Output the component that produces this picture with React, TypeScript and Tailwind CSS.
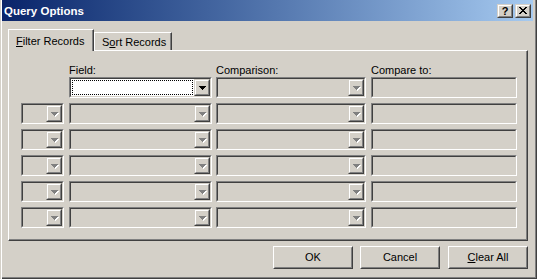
import React from "react";

const font = "font-['Liberation_Sans',Arial,sans-serif]";
const tri = "M0 0h7v1H0zM1 1h5v1H1zM2 2h3v1H2zM3 3h1v1H3z";

function DropArrow({ disabled }: { disabled?: boolean }) {
  if (disabled)
    return (
      <svg width="8" height="5" viewBox="0 0 8 5" shapeRendering="crispEdges" className="ml-px mt-px">
        <path d={tri} transform="translate(1 1)" fill="#ffffff" />
        <path d={tri} fill="#808080" />
      </svg>
    );
  return (
    <svg width="7" height="4" viewBox="0 0 7 4" shapeRendering="crispEdges">
      <path d={tri} fill="#000000" />
    </svg>
  );
}

function Sunken({
  className,
  innerClass,
  children,
}: {
  className: string;
  innerClass: string;
  children?: React.ReactNode;
}) {
  return (
    <div className={`border border-t-[#808080] border-l-[#808080] border-r-white border-b-white ${className}`}>
      <div
        className={`h-full w-full border border-t-[#404040] border-l-[#404040] border-r-[#d4d0c8] border-b-[#d4d0c8] ${innerClass}`}
      >
        {children}
      </div>
    </div>
  );
}

function DropBtn({ disabled }: { disabled?: boolean }) {
  return (
    <div className="w-[16px] h-full bg-[#d4d0c8] border border-t-[#d4d0c8] border-l-[#d4d0c8] border-r-[#404040] border-b-[#404040]">
      <div className="h-full w-full border border-t-white border-l-white border-r-[#808080] border-b-[#808080] flex items-center justify-center">
        <DropArrow disabled={disabled} />
      </div>
    </div>
  );
}

function Combo({ w, enabled, focus }: { w: string; enabled?: boolean; focus?: boolean }) {
  return (
    <Sunken className={`${w} h-[21px]`} innerClass={enabled ? "flex bg-white" : "flex bg-[#d4d0c8]"}>
      <div className="flex-1 p-px">
        {focus && <div className="h-full w-full border border-dotted border-black" />}
      </div>
      <DropBtn disabled={!enabled} />
    </Sunken>
  );
}

function PushButton({ children, className }: { children: React.ReactNode; className?: string }) {
  return (
    <div
      className={`w-[80px] h-[23px] border border-t-white border-l-white border-r-[#404040] border-b-[#404040] ${className ?? ""}`}
    >
      <div className="h-full w-full border border-t-[#d4d0c8] border-l-[#d4d0c8] border-r-[#808080] border-b-[#808080] flex items-center justify-center text-[11px] leading-[13px] text-black">
        {children}
      </div>
    </div>
  );
}

function CaptionBtn({ children, className }: { children: React.ReactNode; className?: string }) {
  return (
    <div
      className={`w-[16px] h-[14px] bg-[#d4d0c8] border border-t-[#d4d0c8] border-l-[#d4d0c8] border-r-[#404040] border-b-[#404040] ${className ?? ""}`}
    >
      <div className="h-full w-full border border-t-white border-l-white border-r-[#808080] border-b-[#808080] flex items-center justify-center">
        {children}
      </div>
    </div>
  );
}

export default function App() {
  const rows = [0, 1, 2, 3, 4, 5];
  return (
    <div
      className={`${font} w-[537px] h-[279px] bg-[#d4d0c8] text-black text-[11px] leading-[13px] flex flex-col shadow-[inset_1px_0_0_#d4d0c8,inset_2px_0_0_#ffffff,inset_-1px_-1px_0_#404040,inset_-2px_-2px_0_#808080]`}
    >
      {/* Title bar */}
      <div className="ml-[2px] w-[531px] h-[21px] bg-linear-to-r from-[#0a246a] to-[#a6caf0] flex items-center pl-[2px] pr-[2px]">
        <span className="text-white font-bold text-[11.5px] leading-[14px] flex-1 pt-[1px]">Query Options</span>
        <CaptionBtn>
          <span className="font-bold text-[11px] leading-[10px] text-black">?</span>
        </CaptionBtn>
        <CaptionBtn className="ml-[2px]">
          <svg width="8" height="7" viewBox="0 0 8 7" shapeRendering="crispEdges">
            <path
              d="M0 0h2v1H0zM6 0h2v1H6zM1 1h2v1H1zM5 1h2v1H5zM2 2h4v1H2zM3 3h2v1H3zM2 4h4v1H2zM1 5h2v1H1zM5 5h2v1H5zM0 6h2v1H0zM6 6h2v1H6z"
              fill="#000"
            />
          </svg>
        </CaptionBtn>
      </div>

      {/* Tabs */}
      <div className="ml-[8px] mt-[8px] h-[21px] flex items-end">
        <div className="relative z-10 h-[22px] -mb-px w-[86px] bg-[#d4d0c8] border-l border-t border-l-white border-t-white border-r border-r-[#404040] shadow-[inset_-1px_0_0_#808080] pl-[7px] pt-[5px] whitespace-nowrap">
          <span className="underline">F</span>ilter Records
        </div>
        <div className="h-[18px] w-[78px] border-l border-t border-l-white border-t-white border-r border-r-[#404040] shadow-[inset_-1px_0_0_#808080] pl-[7px] pt-[3px] whitespace-nowrap">
          S<span className="underline">o</span>rt Records
        </div>
      </div>

      {/* Panel */}
      <div className="ml-[8px] w-[520px] h-[191px] border-l border-t border-l-white border-t-white border-r border-b border-r-[#404040] border-b-[#404040] shadow-[inset_-1px_-1px_0_#808080] pl-[12px] pt-[13px]">
        <div className="flex h-[13px]">
          <div className="w-[48px]" />
          <div className="w-[143px]">Field:</div>
          <div className="ml-[4px] w-[150px]">Comparison:</div>
          <div className="ml-[5px] w-[146px]">Compare to:</div>
        </div>
        <div className="flex flex-col gap-[5px]">
          {rows.map((i) => (
            <div key={i} className="flex">
              {i === 0 ? <div className="w-[43px]" /> : <Combo w="w-[43px]" />}
              <div className="ml-[5px]">
                <Combo w="w-[143px]" enabled={i === 0} focus={i === 0} />
              </div>
              <div className="ml-[4px]">
                <Combo w="w-[150px]" />
              </div>
              <div className="ml-[5px]">
                <Sunken className="w-[146px] h-[21px]" innerClass="bg-[#d4d0c8]" />
              </div>
            </div>
          ))}
        </div>
      </div>

      {/* Buttons */}
      <div className="ml-[8px] mt-[5px] w-[520px] flex justify-end">
        <PushButton className="mr-[7px]">OK</PushButton>
        <PushButton className="mr-[8px]">Cancel</PushButton>
        <PushButton>
          <span>
            <span className="underline">C</span>lear All
          </span>
        </PushButton>
      </div>
    </div>
  );
}
